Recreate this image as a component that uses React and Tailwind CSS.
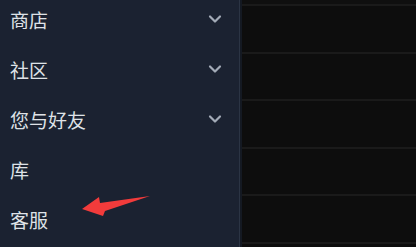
import React from "react";

const Chevron = () => (
  <svg width="14" height="10" viewBox="0 0 14 10" className="text-[#a3abb7]">
    <path d="M2 2.5 L7 7.5 L12 2.5" fill="none" stroke="currentColor" strokeWidth="2.2" strokeLinecap="round" strokeLinejoin="round" />
  </svg>
);

const items = [
  { label: "商店", chev: true },
  { label: "社区", chev: true },
  { label: "您与好友", chev: true },
  { label: "库", chev: false },
  { label: "客服", chev: false },
];

export default function App() {
  return (
    <div
      className="relative flex h-[247px] w-[416px] overflow-hidden bg-[#0d0d0d]"
      style={{ fontFamily: '"Noto Sans CJK SC", "Noto Sans", sans-serif' }}
    >
      <div className="flex w-[239px] shrink-0 flex-col bg-[#1b2231] -mt-[6px]">
        {items.map((it) => (
          <div key={it.label} className="flex h-[50px] items-center justify-between pl-[10px] pr-[17px]">
            <span className="text-[19px] leading-none text-[#dfe2e7]">{it.label}</span>
            {it.chev && <Chevron />}
          </div>
        ))}
      </div>
      <div className="w-px shrink-0 bg-[#2b3444]" />
      <div className="w-[2px] shrink-0 bg-[#141922]" />
      <div className="flex flex-1 flex-col">
        <div className="h-[4px] shrink-0 bg-[#0f0f0f]" />
        {[0, 1, 2, 3, 4, 5].map((i) => (
          <div key={i} className="h-[47.6px] shrink-0 border-t-2 border-[#1a1a1a] bg-[#0d0d0d]" />
        ))}
      </div>
      <svg className="absolute left-0 top-0" width="416" height="247" viewBox="0 0 416 247">
        <polygon points="82,209 99,197 100,203 150,196 105,211 103,216" fill="#f23b3b" />
      </svg>
    </div>
  );
}
